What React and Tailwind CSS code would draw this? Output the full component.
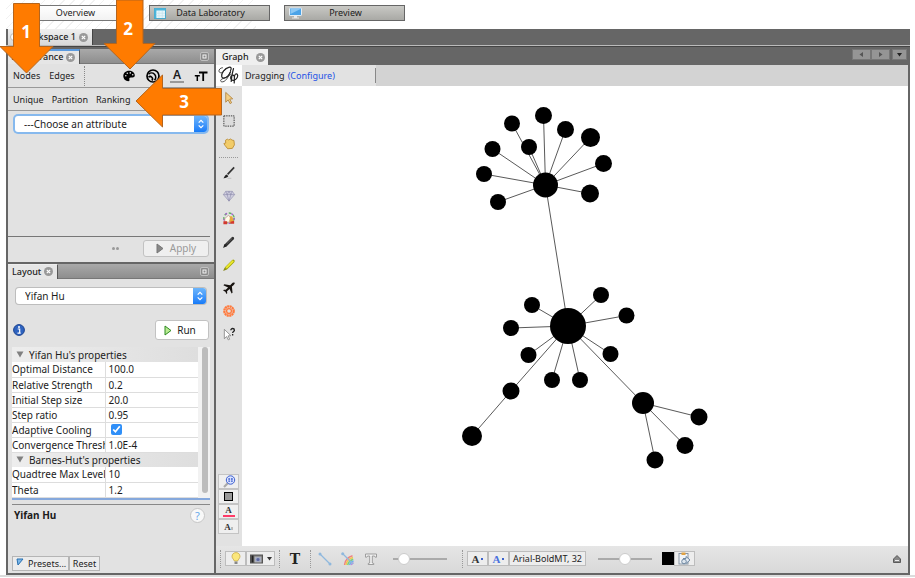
import React from "react";

const nodes = [
  [545.5, 185, 12.5], [568, 326, 18], [643, 403, 11], [472, 436, 10],
  [512, 123.5, 8], [543.5, 115.5, 8.5], [565.5, 129.5, 8.5], [590.5, 137.5, 9.5], [529, 147, 8],
  [492.5, 149, 8], [484, 174, 8], [603.5, 163.5, 8.5], [498, 202, 8], [590, 193.5, 9],
  [532, 305, 8], [601, 295, 8], [626.5, 315.5, 8], [511, 328, 8], [528.5, 355, 8],
  [552, 380, 8], [580, 380, 8], [610.5, 354, 8], [511, 391, 8.5],
  [699, 417, 8.5], [685, 445.5, 8.5], [655, 460, 8.5],
];

const edges = [
  ...[4, 5, 6, 7, 8, 9, 10, 11, 12, 13, 1].map((i) => [0, i]),
  ...[14, 15, 16, 17, 18, 19, 20, 21, 22, 2].map((i) => [1, i]),
  [22, 3],
  ...[23, 24, 25].map((i) => [2, i]),
];

function Graph() {
  return (
    <svg viewBox="242 86 666 460" preserveAspectRatio="xMidYMid meet" className="h-full w-full" role="img" aria-label="Network graph">
      {edges.map(([a, b]) => (
        <line key={`${a}-${b}`} x1={nodes[a][0]} y1={nodes[a][1]} x2={nodes[b][0]} y2={nodes[b][1]} stroke="#111" strokeWidth="0.7" />
      ))}
      {nodes.map(([x, y, r]) => (
        <circle key={`${x}-${y}`} cx={x} cy={y} r={r} />
      ))}
    </svg>
  );
}

function CloseButton() {
  return (
    <button aria-label="Close" className="h-[9px] w-[9px]">
      <svg viewBox="0 0 9 9" className="block h-full w-full">
        <circle cx="4.5" cy="4.5" r="4.5" fill="#999" />
        <path d="M2.8 2.8l3.4 3.4M6.2 2.8L2.8 6.2" stroke="#fff" strokeWidth="1.2" />
      </svg>
    </button>
  );
}

function MinimizeButton() {
  return (
    <button aria-label="Minimize" className="mr-[5px] h-[9px] w-[9px]">
      <svg viewBox="0 0 9 9" className="block h-full w-full">
        <rect x="0.5" y="0.5" width="8" height="8" rx="1.5" fill="#8a8a8a" stroke="#ccc" strokeWidth="0.8" />
        <rect x="3" y="3" width="3" height="3" fill="none" stroke="#f4f4f4" />
      </svg>
    </button>
  );
}

function PanelTabs({ title, active }) {
  return (
    <div className="flex h-[15px] shrink-0 items-center justify-between border-b border-[#777] bg-gradient-to-b from-[#a9a9a9] to-[#8e8e8e]">
      <div className={`flex h-[15px] items-center gap-[3px] border-r border-[#555] bg-[#e6e6e6] px-1 font-medium ${active ? "border-t-2 border-t-[#5b9be0]" : "border-t border-t-[#eee]"}`}>
        <span>{title}</span>
        <CloseButton />
      </div>
      <MinimizeButton />
    </div>
  );
}

function Dropdown({ label, options, focused }) {
  return (
    <div className={`relative flex h-4 overflow-hidden rounded-[3px] bg-white ${focused ? "ring-2 ring-[#86b9ee]" : "ring-1 ring-[#bdbdbd]"}`}>
      <select aria-label={label} className="h-4 w-full appearance-none bg-transparent pl-[9px] text-[10px] leading-4 outline-none">
        {options.map((o) => <option key={o}>{o}</option>)}
      </select>
      <span className="pointer-events-none absolute inset-y-0 right-0 flex w-[13px] items-center justify-center bg-gradient-to-b from-[#6cb5fb] to-[#157bf8]">
        <svg viewBox="0 0 8 12" className="h-3 w-2" fill="none" stroke="#fff" strokeWidth="1.2">
          <path d="M1.7 4.6L4 2.3l2.3 2.3M1.7 7.4L4 9.7l2.3-2.3" />
        </svg>
      </span>
    </div>
  );
}

function Perspective({ label, selected, children }) {
  return (
    <button className={`flex h-4 w-[121px] items-center border pl-1 ${selected ? "border-[#777] bg-gradient-to-b from-white to-[#f2f2f2]" : "border-[#666] bg-gradient-to-b from-[#c9c9c5] to-[#a9a9a5]"}`}>
      <span className="w-4">{children}</span>
      <span className="flex-1 pr-[18px] text-center">{label}</span>
    </button>
  );
}

function Appearance() {
  return (
    <section className="flex h-[213px] shrink-0 flex-col bg-[#e2e2e2]">
      <PanelTabs title="Appearance" active />
      <div className="flex h-6 shrink-0 items-center justify-between border-b border-[#999] pl-[5px] pr-[6px] pt-px">
        <div className="flex h-full items-center gap-[9px]">
          <button>Nodes</button>
          <button>Edges</button>
          <span className="h-5 border-l border-dotted border-[#888]" />
        </div>
        <div className="flex items-center gap-[10px]">
          <button aria-label="Color">
            <svg viewBox="0 0 14 14" className="block h-[14px] w-[14px]">
              <path d="M7 1.800C3.700 1.800 1.300 4.200 1.300 7c0 2.900 2.300 5.200 5 5.200 1.200 0 1.400-.9 1.100-1.700-.4-1.100.3-2 1.400-2h1.700c1.300 0 2.300-.9 2.300-2C12.800 3.800 10.200 1.800 7 1.800z" />
              <g fill="#e2e2e2"><circle cx="3.800" cy="6.800" r=".8" /><circle cx="5.300" cy="4.300" r=".8" /><circle cx="8.300" cy="3.900" r=".8" /><circle cx="10.700" cy="5.700" r=".8" /></g>
            </svg>
          </button>
          <button aria-label="Size">
            <svg viewBox="0 0 14 14" className="block h-[14px] w-[14px]" fill="none" stroke="#000">
              <circle cx="7" cy="7" r="6" strokeWidth="1.700" />
              <path d="M2.500 5.300a4.200 4.200 0 1 1 6 6" strokeWidth="1.500" />
              <path d="M2.500 8.200a2.300 2.300 0 1 1 3.300 3.300" strokeWidth="1.500" />
            </svg>
          </button>
          <button aria-label="Label color" className="flex h-[14px] w-[14px] flex-col items-center border-b-2 border-[#999] text-[12px] font-semibold leading-[12px]">A</button>
          <button aria-label="Label size">
            <svg viewBox="0 0 14 14" className="block h-[14px] w-[14px]" stroke="#000" fill="none">
              <path d="M5 3.500h8.500M9.200 3.500V12" strokeWidth="1.800" />
              <path d="M.8 6.700h5M3.300 6.700V12" strokeWidth="1.500" />
            </svg>
          </button>
        </div>
      </div>
      <div className="flex h-[23px] shrink-0 items-center gap-2 border-b border-[#999] pl-[5px] pt-[2px]">
        <button>Unique</button>
        <button>Partition</button>
        <button>Ranking</button>
      </div>
      <div className="flex-1 px-[7px] pt-[5px]">
        <Dropdown label="Attribute" options={["---Choose an attribute"]} focused />
      </div>
      <div className="mr-1 flex h-[26px] shrink-0 items-center justify-end gap-6 border-t border-[#777] pb-[3px] pr-px">
        <span className="flex gap-px"><i className="h-[3px] w-[3px] rounded-full bg-[#999]" /><i className="h-[3px] w-[3px] rounded-full bg-[#999]" /></span>
        <button disabled className="flex h-[17px] w-[66px] items-center justify-center gap-[6px] rounded-[3px] border border-[#c2c2c2] bg-[#efefef] text-[10px] text-[#999]">
          <svg viewBox="0 0 8 11" className="h-[11px] w-2"><path d="M1 1l6 4.500L1 10z" fill="#888" stroke="#777" /></svg>
          Apply
        </button>
      </div>
    </section>
  );
}

const groups = [
  { name: "Yifan Hu's properties", rows: [["Optimal Distance", "100.0"], ["Relative Strength", "0.2"], ["Initial Step size", "20.0"], ["Step ratio", "0.95"], ["Adaptive Cooling", true], ["Convergence Threshold", "1.0E-4"]] },
  { name: "Barnes-Hut's properties", rows: [["Quadtree Max Level", "10"], ["Theta", "1.2"]] },
];

function Layout() {
  return (
    <section className="flex flex-1 flex-col bg-[#e2e2e2]">
      <PanelTabs title="Layout" />
      <div className="px-2 pt-[9px]">
        <Dropdown label="Layout algorithm" options={["Yifan Hu"]} />
      </div>
      <div className="mt-4 flex shrink-0 items-center justify-between px-[5px]">
        <svg viewBox="0 0 12 12" className="h-3 w-3">
          <circle cx="6" cy="6" r="5.400" fill="#2e63c0" stroke="#1c438f" />
          <path d="M4.700 5h2v4M4.500 9.100h3.200" stroke="#fff" strokeWidth="1.200" fill="none" /><circle cx="6" cy="3" r="1" fill="#fff" />
        </svg>
        <button className="flex h-5 w-[54px] items-center justify-center gap-[5px] rounded-[3px] border border-[#c2c2c2] bg-white pr-1 text-[10px]">
          <svg viewBox="0 0 8 11" className="h-[11px] w-2"><path d="M1 1l6 4.500L1 10z" fill="#b9ec92" stroke="#2f8a22" /></svg>
          Run
        </button>
      </div>
      <div className="mx-1 mt-[7px] flex shrink-0 border-b-2 border-[#85a8dc] bg-[#f2f2f2]">
        <div className="min-w-0 flex-1">
          <table className="w-full table-fixed border-collapse bg-white text-[10px] leading-[14px]">
            <colgroup><col className="w-[93px]" /><col /></colgroup>
            {groups.map((g) => (
              <tbody key={g.name}>
                <tr className="h-[15px] bg-gradient-to-r from-[#ededed] to-[#dedede]">
                  <th colSpan={2} className="p-0 text-left font-normal">
                    <span className="flex items-center gap-[5px] pl-1">
                      <svg viewBox="0 0 8 7" className="h-[7px] w-2"><path d="M0.500 0.500h7L4 6.500z" fill="#808080" /></svg>
                      {g.name}
                    </span>
                  </th>
                </tr>
                {g.rows.map(([k, v]) => (
                  <tr key={k} className="h-[15px] border-b border-[#ddd]">
                    <td className="overflow-hidden whitespace-nowrap border-r border-[#ddd] p-0">{k}</td>
                    <td className="p-0 pl-[3px]">
                      {v === true ? <input type="checkbox" defaultChecked aria-label={k} className="ml-[2px] block h-[11px] w-[11px] accent-[#2f8ff8]" /> : v}
                    </td>
                  </tr>
                ))}
              </tbody>
            ))}
          </table>
        </div>
        <div className="w-3 pl-1"><div className="h-[146px] w-[6px] rounded-full bg-[#bcbcbc]" /></div>
      </div>
      <div className="mx-1 mt-1 flex flex-1 flex-col justify-between border-t border-[#888]">
        <div className="flex items-center justify-between pl-[2px] pr-[5px] pt-[3px]">
          <h2 className="text-[10px] font-bold">Yifan Hu</h2>
          <button aria-label="Help" className="flex h-[15px] w-[15px] items-center justify-center rounded-full border border-[#c6c6c6] bg-[#f8f8f8] text-[11px] leading-none text-[#69a9ea]">?</button>
        </div>
        <div className="mb-[2px] flex">
          <button className="flex h-[15px] w-[57px] items-center gap-[4px] border border-[#b5b5b5] bg-[#ececec] pl-[3px]">
            <svg viewBox="0 0 8 8" className="mb-1 h-2 w-2"><path d="M1 1h6L2 7z" fill="#7cb7e8" stroke="#2870b0" /></svg>
            Presets...
          </button>
          <button className="h-[15px] w-[31px] border border-[#b5b5b5] bg-[#ececec]">Reset</button>
        </div>
      </div>
    </section>
  );
}

const tools = [
  ["Select", <path key="a" d="M4 1.500v10.500l2.600-2.500 2 4 1.700-.9-2-3.900 3.200-.3z" fill="#f3cf86" stroke="#a9772e" strokeWidth=".8" />],
  ["Rectangle selection", <rect key="a" x="2" y="2" width="11" height="11" fill="#dcdcdc" stroke="#333" strokeDasharray="1.500 1" />],
  ["Drag", <path key="a" d="M2 7l2-.5-.3-3 2-1.200 1.400.8 2-1 1.700 1.200 2 .4.500 4.800-2.200 3.700-5 .4L3.200 9z" fill="#f2cc69" stroke="#b98a32" strokeWidth=".9" />],
  null,
  ["Painter", <g key="a"><path d="M6 9l7-7.500" stroke="#333" strokeWidth="1.800" /><path d="M1.500 13c1-.5 1.500-3.500 3.300-4l2 1.800c-.8 1.700-3 2.300-5.300 2.200z" fill="#222" /><path d="M6 13.200h4" stroke="#bbb" /></g>],
  ["Sizer", <g key="a" stroke="#8583a5" strokeWidth=".6"><path d="M1.500 6l2.500-3.500h7L13.500 6l-6 7z" fill="#d0cfe0" /><path d="M1.500 6h12M4 2.500L5.500 6l2 7 2-7L11 2.500M5.500 6l2-3.500L9.500 6" fill="none" /></g>],
  ["Brush", <g key="a"><circle cx="7.500" cy="6.500" r="5.500" fill="none" stroke="#5fb361" strokeWidth="1.500" strokeDasharray="3 2" /><circle cx="7.500" cy="6.500" r="5.500" fill="none" stroke="#a85ed0" strokeWidth="1.500" strokeDasharray="2 5" /><path d="M3 7l4-3.500 2.500 3-2 4.500H3z" fill="#fffbe8" stroke="#a77" strokeWidth=".6" /><path d="M8.500 4.500h2.500l2 7H8z" fill="#e8a83b" /><path d="M1.500 10h4v3h-4zM9 10.500l4-1v3H9z" fill="#d3382f" /></g>],
  ["Pencil", <g key="a"><path d="M4 11l7.500-7.500" stroke="#2b2b2b" strokeWidth="3" strokeLinecap="round" /><path d="M5 9.500l6-6" stroke="#888" strokeWidth=".7" /><path d="M1.200 13.800l1.300-3.800 2.500 2z" fill="#222" /></g>],
  ["Highlighter", <g key="a"><path d="M4.500 10.800l7.500-7.500" stroke="#a4a70c" strokeWidth="3.200" strokeLinecap="round" /><path d="M4.500 10.500l7.500-7.500" stroke="#ece92e" strokeWidth="2" /><path d="M1.200 13.800l1.500-3.300 2 2z" fill="#8a8a20" /></g>],
  ["Shortest path", <path key="a" d="M13.500 2c-1-.8-2.200 0-3.200 1L8.800 4.500 2.500 3.600l-1 1 5 2.300L4 9.500l-2-.2-.8.800 2.400 1.300 1.200 2.400.8-.8-.2-2 2.700-2.500 2.200 5 1-1L10.600 6l1.700-1.500c.9-1 1.900-1.900 1.200-2.500z" fill="#17130f" />],
  ["Heat map", <g key="a" fill="none" stroke="#ff7a3d"><circle cx="7.500" cy="7.500" r="5" strokeWidth="2.500" strokeDasharray="2.200 .42" /><circle cx="7.500" cy="7.500" r="2.600" strokeWidth="1.400" /></g>],
  ["Edit", <g key="a"><path d="M2.500 2.500v10l2.500-2.300 1.700 3.600 1.500-.7-1.700-3.600 3-.2z" fill="#fff" stroke="#777" strokeWidth=".8" /><path d="M9.500 3.500c0-2.500 3.800-2.500 3.800 0 0 1.500-1.900 1.300-1.900 2.900M11.400 7.500V9" fill="none" stroke="#222" strokeWidth="1.400" /></g>],
];

function ToolColumn() {
  return (
    <div className="flex w-[26px] shrink-0 flex-col items-center justify-between bg-[#e2e2e2] pb-3 pr-px">
      <div>
        {tools.map((t) =>
          t ? (
            <button key={t[0]} aria-label={t[0]} className="flex h-[23px] w-[25px] items-center justify-center">
              <svg viewBox="0 0 15 15" className="h-[14px] w-[14px]">{t[1]}</svg>
            </button>
          ) : (
            <div key="sep" className="mx-[3px] mb-[3px] mt-[2px] border-t border-dotted border-[#999]" />
          )
        )}
      </div>
      <div className="flex flex-col">
        <button aria-label="Center on graph" className="flex h-[15px] w-[21px] items-center justify-center border border-[#c4c4c4] bg-[#efefef]">
          <svg viewBox="0 0 14 13" className="h-[13px] w-[14px]"><path d="M2 12l4-4" stroke="#aaa" strokeWidth="2.200" /><circle cx="8.500" cy="5" r="4.200" fill="#dbe4ff" stroke="#3d5fd0" /><path d="M6.300 4h1.800M9 4h1.800M6.300 6.200h1.800M9 6.200h1.800" stroke="#3d5fd0" strokeWidth="1.300" /></svg>
        </button>
        <button aria-label="Background color" className="flex h-[15px] w-[21px] items-center justify-center border border-[#c4c4c4] bg-[#efefef]"><span className="h-[9px] w-[9px] border border-black bg-[#999]" /></button>
        <button aria-label="Reset label colors" className="flex h-[15px] w-[21px] flex-col items-center justify-center border border-[#c4c4c4] bg-[#efefef] font-['Liberation_Serif',serif] text-[9px] font-bold leading-[9px] text-[#333]">A<span className="h-[2px] w-3 bg-[#ff3b68]" /></button>
        <button aria-label="Label visibility" className="flex h-[15px] w-[21px] items-center justify-center border border-[#c4c4c4] bg-[#efefef] font-['Liberation_Serif',serif] text-[9px] font-bold text-[#333]">A<span className="mt-1 h-[3px] w-[2px] bg-[#bbb]" /></button>
      </div>
    </div>
  );
}

function Slider({ label, value }) {
  return (
    <input
      type="range"
      aria-label={label}
      defaultValue={value}
      className="h-3 w-[54px] appearance-none bg-transparent [&::-webkit-slider-runnable-track]:h-[2px] [&::-webkit-slider-runnable-track]:bg-[#aaa] [&::-webkit-slider-thumb]:-mt-[5px] [&::-webkit-slider-thumb]:h-3 [&::-webkit-slider-thumb]:w-3 [&::-webkit-slider-thumb]:appearance-none [&::-webkit-slider-thumb]:rounded-full [&::-webkit-slider-thumb]:border [&::-webkit-slider-thumb]:border-[#ccc] [&::-webkit-slider-thumb]:bg-white"
    />
  );
}

function Grip() {
  return <span className="h-[18px] w-px border-l border-dotted border-[#999]" />;
}

function BottomBar() {
  const box = "flex h-[15px] items-center justify-center border border-[#bdbdbd] bg-[#ededed]";
  return (
    <div className="flex h-[27px] shrink-0 items-center bg-gradient-to-b from-[#e6e6e6] to-[#d8d8d8] pb-[2px] pl-1 pr-[7px]">
      <Grip />
      <div className="mx-1 flex">
        <button aria-label="Background" className={`${box} w-[21px]`}>
          <svg viewBox="0 0 12 13" className="h-[13px] w-3"><path d="M4.300 9C4 7.500 2 6.500 2 4.300 2 2.200 3.800.6 6 .6s4 1.600 4 3.700C10 6.500 8 7.500 7.700 9z" fill="#fbe77c" stroke="#c3a33a" strokeWidth=".7" /><path d="M4.500 9.500h3v2.500h-3z" fill="#888" /></svg>
        </button>
        <button aria-label="Take screenshot" className={`${box} w-[29px] gap-1`}>
          <svg viewBox="0 0 13 10" className="h-[10px] w-[13px]"><rect x=".5" y="1" width="12" height="8" fill="#777" stroke="#555" /><path d="M2.500 1.500v7" stroke="#222" strokeWidth="2" /><rect x="5" y="3" width="6" height="5" fill="#9aa3c4" stroke="#bbb" strokeWidth=".8" /><circle cx="8" cy="5.500" r="1.500" fill="#5a66a0" /></svg>
          <svg viewBox="0 0 5 4" className="h-1 w-[5px]"><path d="M0 0h5L2.500 3.500z" fill="#333" /></svg>
        </button>
      </div>
      <Grip />
      <button aria-label="Show node labels" className="mx-2 w-[14px] text-center font-['DejaVu_Serif',serif] text-[14px] font-bold leading-none text-[#222]">T</button>
      <Grip />
      <div className="ml-[7px] flex items-center gap-[9px]">
        <button aria-label="Show edges"><svg viewBox="0 0 14 14" className="block h-[14px] w-[14px]"><path d="M2.500 2.500l9 9" stroke="#8fb8dd" strokeWidth="1.300" /><circle cx="2" cy="2" r="1.500" fill="#8fb8dd" /><circle cx="12" cy="12" r="1.500" fill="#8fb8dd" /></svg></button>
        <button aria-label="Edge color"><svg viewBox="0 0 14 14" className="block h-[14px] w-[14px]" fill="none"><path d="M3.500 13C4 8.500 7 5 11.500 3.800" stroke="#f08080" strokeWidth="1.500" /><path d="M5 13c.5-3.500 3-6.300 7-7.500" stroke="#f2c64f" strokeWidth="1.500" /><path d="M6.700 13c.5-2.500 2.300-4.700 5.500-5.800" stroke="#7ccf7c" strokeWidth="1.500" /><path d="M8.500 13c.5-1.800 1.500-3.200 4-4" stroke="#6fb4e8" strokeWidth="1.500" /><path d="M10.200 13c.3-.9 1-1.800 2.300-2.300" stroke="#b98ae0" strokeWidth="1.500" /><path d="M1.500 1.500l10.500 10.500" stroke="#8fb8dd" strokeWidth="1.200" /><circle cx="1.700" cy="1.700" r="1.500" fill="#8fb8dd" /></svg></button>
        <button aria-label="Show edge labels"><svg viewBox="0 0 14 14" className="block h-[14px] w-[14px]"><path d="M1.500 2h11v3.200h-1.300L10.500 4H8.300v7l1.500.500V12.500H4.200v-1L5.700 11V4H3.500l-.7 1.200H1.500z" fill="#f2f2f2" stroke="#8b8b8b" strokeWidth=".8" /></svg></button>
        <span className="ml-[6px] flex"><Slider label="Edge weight" value={12} /></span>
      </div>
      <span className="ml-[15px] flex"><Grip /></span>
      <div className="ml-1 flex">
        <button aria-label="Size mode" className={`${box} w-[21px] gap-[2px] font-['Liberation_Serif',serif] text-[11px] font-bold text-[#333]`}>A<span className="h-[2px] w-[2px] bg-[#3c62cc]" /></button>
        <button aria-label="Color mode" className={`${box} w-[21px] gap-[2px] font-['Liberation_Serif',serif] text-[11px] font-bold text-[#4b72dd]`}>A<span className="h-[2px] w-[2px] bg-[#3c62cc]" /></button>
        <button className={`${box} w-[77px] whitespace-nowrap`}>Arial-BoldMT, 32</button>
      </div>
      <span className="ml-3 flex"><Slider label="Label size" value={50} /></span>
      <div className="ml-[10px] flex items-center">
        <button aria-label="Default color" className="h-[13px] w-3 bg-black" />
        <button aria-label="Configure labels" className={`${box} w-[21px]`}>
          <svg viewBox="0 0 13 13" className="h-[13px] w-[13px]"><rect x="1" y="1.500" width="9" height="10.500" fill="#f2f5f8" stroke="#8795a5" /><path d="M3.500 .5h4v2.500h-4z" fill="#e1a243" /><path d="M5 6.500h3V4.500l4 3.500-4 3.500" fill="#e8eff7" stroke="#53718f" strokeWidth=".8" /><circle cx="6" cy="9.500" r="2.300" fill="#dde5ed" stroke="#53718f" strokeWidth=".8" /></svg>
        </button>
      </div>
      <button aria-label="Expand" className="ml-auto"><svg viewBox="0 0 8 8" className="block h-2 w-2"><path d="M4 .500l3.500 3.500V7.500h-7V4z" fill="#888" stroke="#444" strokeWidth=".8" /><path d="M2 5.500h4" stroke="#eee" /></svg></button>
    </div>
  );
}

function GraphWindow() {
  const nav = "flex h-[11px] items-center justify-center border border-[#777] bg-[#959595]";
  return (
    <main className="flex min-w-0 flex-1 flex-col">
      <div className="flex h-4 shrink-0 items-end justify-between bg-[#666]">
        <div className="flex h-4 w-[52px] items-center gap-[7px] bg-[#efefef] pl-[6px] font-medium">
          <span>Graph</span>
          <CloseButton />
        </div>
        <div className="mb-[5px] mr-px flex">
          <button aria-label="Previous" className={`${nav} w-[19px]`}><svg viewBox="0 0 5 5" className="h-[5px] w-[5px]"><path d="M4 0v5L.500 2.500z" fill="#555" /></svg></button>
          <button aria-label="Next" className={`${nav} w-[19px]`}><svg viewBox="0 0 5 5" className="h-[5px] w-[5px]"><path d="M1 0v5l3.500-2.500z" fill="#555" /></svg></button>
          <button aria-label="Documents" className={`${nav} ml-[2px] w-[15px]`}><svg viewBox="0 0 5 5" className="h-[5px] w-[5px]"><path d="M0 1h5L2.500 4.500z" fill="#222" /></svg></button>
        </div>
      </div>
      <div className="flex h-[21px] shrink-0 items-stretch bg-[#d3d3d3]">
        <div className="flex w-40 items-center bg-[#e2e2e2]">
          <svg viewBox="0 0 26 21" className="h-[21px] w-[26px] shrink-0 bg-white" fill="none" stroke="#222" strokeLinecap="round">
            <path d="M14.500 5.500c1.500-2.300.5-3.700-1.700-3.200C9 3.200 5.200 8 5.700 11.500c.4 2.500 3.700 2 6-.4 1.400-1.500 2.300-3 2.800-4.300" strokeWidth="1.200" />
            <path d="M14.500 6.800c-1.800 4-4 9.200-7.500 10-2.600.5-3.300-1.600-1-2.800 2.700-1.300 5.800-1.700 8.500-4.500M6.500 2.700C3.500 2.500 1.700 6.500 4 7.600c2 .8 4.300-1.800 6.300-4.300" strokeWidth=".8" />
            <path d="M17.500 3.500c-1.200 4-2 8-2.300 13M18 11c-.8-1.800-3-.8-3.300 1.200-.4 2.500 1.300 3.600 3.600 2.900 2.600-.8 4.200-4 3-5.700-1.200-1.500-2.800 0-2.900 2.800L18.200 18" strokeWidth="1.200" />
          </svg>
          <span className="ml-[3px]">Dragging</span>
          <a href="#configure" className="ml-[3px] text-[#2453e6]">(Configure)</a>
          <span className="ml-auto h-[15px] w-px bg-[#888]" />
        </div>
      </div>
      <div className="flex min-h-0 flex-1">
        <ToolColumn />
        <div className="min-w-0 flex-1 bg-white"><Graph /></div>
      </div>
      <BottomBar />
    </main>
  );
}

function Callouts() {
  return (
    <svg className="pointer-events-none absolute left-0 top-0 h-32 w-56" viewBox="0 0 224 128">
      <g fill="#ff7b00" stroke="#b5651d" strokeWidth="1">
        <path d="M13.500 3.500h26v43H53L26.500 73 0 46.500h13.500z" />
        <path d="M116.500 0h26.500v43.500h12L130 69l-26-25.500h12.500z" />
        <path d="M221.500 88.500v26.500h-59v12L136 101l26.500-26v13.500z" />
      </g>
      <g fill="#fff" fontSize="17" fontWeight="700" textAnchor="middle">
        <text x="26" y="38">1</text>
        <text x="128" y="35">2</text>
        <text x="184" y="108">3</text>
      </g>
    </svg>
  );
}

export default function App() {
  return (
    <div className="relative flex h-screen min-h-[578px] flex-col bg-white font-['Noto_Sans',sans-serif] text-[9px] leading-3 text-[#1c1c1c]">
      <header className="ml-[6px] flex h-[29px] shrink-0 items-start gap-[14px] bg-[repeating-linear-gradient(135deg,#fff_0px,#fff_6px,#f1f1f1_6px,#f1f1f1_7px)] bg-[length:250px_29px] bg-no-repeat pl-2 pt-[5px]">
        <Perspective label="Overview" selected />
        <Perspective label="Data Laboratory">
          <svg viewBox="0 0 12 11" className="h-[11px] w-3"><rect x=".5" y=".5" width="11" height="10" fill="#e8f7fc" stroke="#4aa9cc" /><path d="M.5 1.500h11M1.500 1v9" stroke="#4ab6dc" strokeWidth="1.800" /><path d="M5 3v7M8.300 3v7M2 5.200h9M2 7.800h9" stroke="#c4e4ee" strokeWidth=".7" /></svg>
        </Perspective>
        <Perspective label="Preview">
          <svg viewBox="0 0 13 12" className="h-3 w-[13px]"><rect x=".5" y="1" width="12" height="7.500" rx=".6" fill="#4aa3e8" stroke="#e5edf3" /><path d="M1.500 7l10-5v-.3h-10z" fill="#8cc8f5" /><path d="M5 9h3v1.500h2v1H3v-1h2z" fill="#e8e8e8" /></svg>
        </Perspective>
      </header>
      <div className="ml-[6px] mr-[5px] flex min-h-0 flex-1 flex-col bg-[#666]">
        <div className="flex h-[17px] shrink-0 items-stretch border-b border-[#bbb] pl-[2px]">
          <div className="flex w-[85px] items-center gap-[3px] border-r border-[#444] bg-gradient-to-b from-[#f0f0f0] to-[#d8d8d8] pl-[2px] font-medium">
            <span className="h-2 w-2 shrink-0 rounded-sm border border-[#bbb] bg-white" />
            <span className="whitespace-nowrap">Workspace 1</span>
            <CloseButton />
          </div>
        </div>
        <div className="flex min-h-0 flex-1 gap-[2px] border-t border-[#444] px-[2px] pb-[2px] pt-[2px]">
          <aside className="flex w-[206px] shrink-0 flex-col gap-[2px]">
            <Appearance />
            <Layout />
          </aside>
          <GraphWindow />
        </div>
      </div>
      <footer className="h-[3px] shrink-0 border-b border-white bg-[#dcdcdc]" />
      <Callouts />
    </div>
  );
}
